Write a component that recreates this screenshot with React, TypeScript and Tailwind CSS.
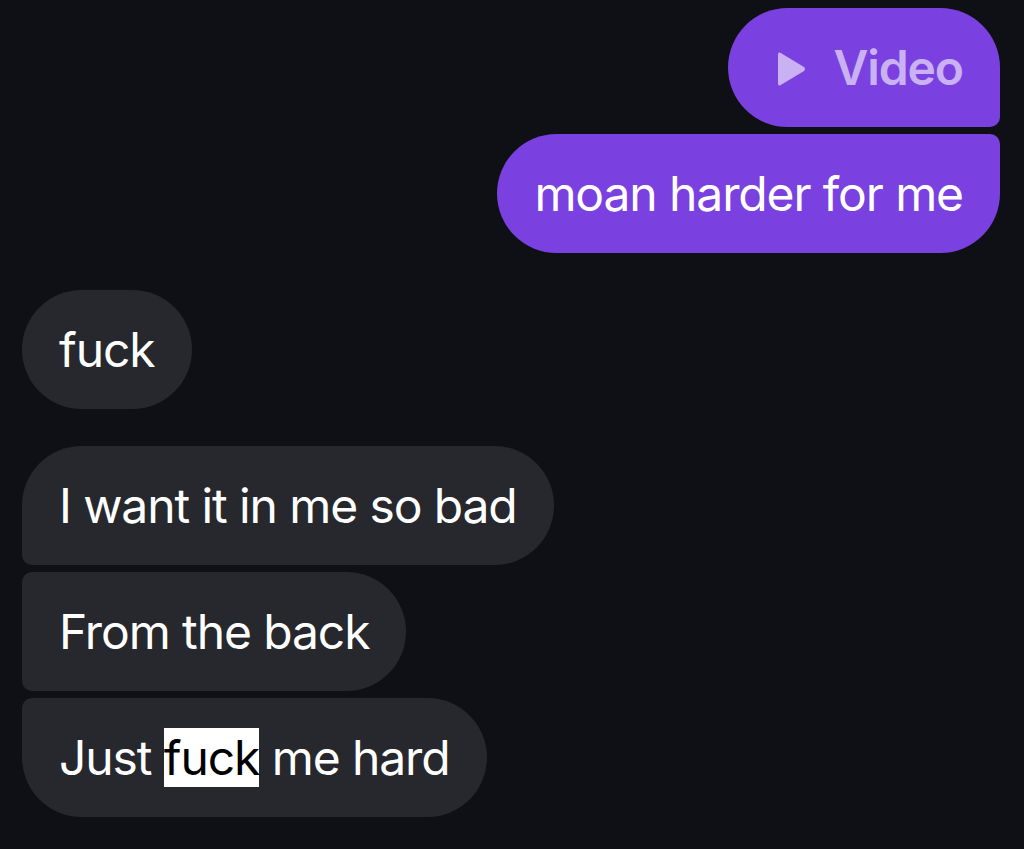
const font = { fontFamily: '"Inter", "Liberation Sans", sans-serif' };

function Bubble({
  children,
  className,
}: {
  children: React.ReactNode;
  className: string;
}) {
  return (
    <div
      className={`h-[119px] flex items-center px-[37px] text-[48px] tracking-[-1.1px] leading-none whitespace-nowrap ${className}`}
    >
      {children}
    </div>
  );
}

export default function App() {
  return (
    <div
      className="w-[1024px] h-[849px] overflow-hidden bg-[#0e1015] text-white pt-[8px] pl-[22px] pr-[24px]"
      style={font}
    >
      {/* Outgoing */}
      <div className="flex flex-col items-end gap-[7px]">
        <Bubble className="bg-[#7a41e0] rounded-[60px] rounded-br-[10px] text-[#c9b1f3] font-semibold pl-[47px]">
          <svg width="32" height="38" viewBox="0 0 32 38" className="mr-[26px] mt-[2px]">
            <path d="M3 4.5 Q3 1.5 5.8 3 L29 17 Q31 19 29 21 L5.8 35 Q3 36.5 3 33.5 Z" fill="#c9b1f3" />
          </svg>
          <span>Video</span>
        </Bubble>
        <Bubble className="bg-[#7a41e0] rounded-[60px] rounded-tr-[10px]">
          moan harder for me
        </Bubble>
      </div>

      {/* Incoming */}
      <div className="flex flex-col items-start mt-[37px]">
        <Bubble className="bg-[#26282d] rounded-[60px]">fuck</Bubble>
      </div>

      <div className="flex flex-col items-start gap-[7px] mt-[37px]">
        <Bubble className="bg-[#26282d] rounded-[60px] rounded-bl-[10px]">
          I want it in me so bad
        </Bubble>
        <Bubble className="bg-[#26282d] rounded-[60px] rounded-l-[10px]">
          From the back
        </Bubble>
        <Bubble className="bg-[#26282d] rounded-[60px] rounded-tl-[10px]">
          <span>Just&nbsp;</span>
          <span className="bg-white text-black h-[59px] flex items-center">fuck</span>
          <span>&nbsp;me hard</span>
        </Bubble>
      </div>
    </div>
  );
}
